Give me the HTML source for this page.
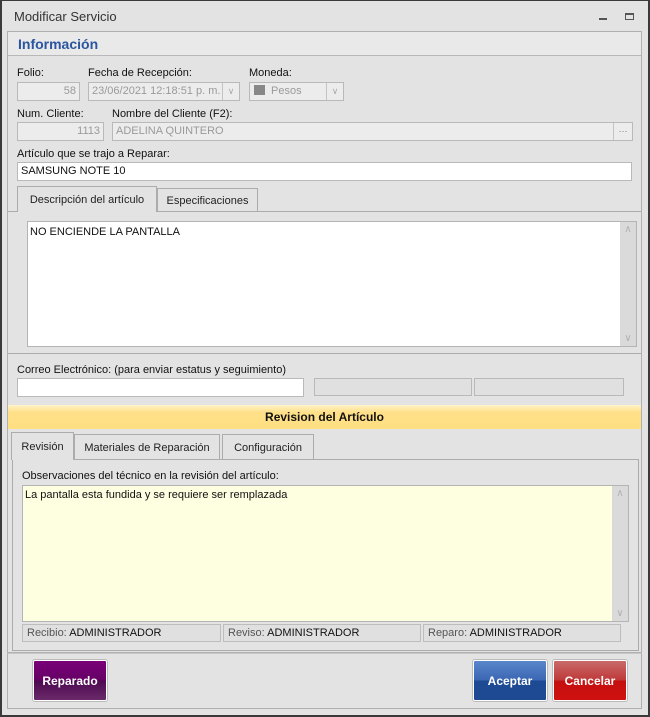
<!DOCTYPE html>
<html><head><meta charset="utf-8"><style>
*{box-sizing:border-box;margin:0;padding:0}
body{width:650px;height:717px;background:#e3e3e3;font-family:"Liberation Sans",sans-serif;font-size:11px;color:#111;position:relative;overflow:hidden}
.a{position:absolute}
.in{position:absolute;border:1px solid #b9b9b9;background:#ececec;color:#9a9a9a;padding:0 3px;line-height:17px;height:19px;white-space:nowrap;overflow:hidden}
.lb{position:absolute;white-space:nowrap}
.dd{position:absolute;border-left:1px solid #c4c4c4;top:0;bottom:0;width:17px;right:0;color:#aaa;text-align:center;font-size:9px;line-height:17px}
.tab{position:absolute;border:1px solid #acacac;border-bottom:none;background:#e3e3e3;text-align:center;line-height:24px;color:#222}
.sb{position:absolute;right:0;top:0;bottom:0;width:16px;background:#dadada;color:#b0b0b0;font-size:10px;text-align:center}
.btn{position:absolute;top:660px;width:74px;height:41px;border:1px solid #fff;border-radius:2px;color:#fff;font-weight:bold;font-size:12px;text-align:center;line-height:40px;box-shadow:0 0 0 1px #bbb}
.st{position:absolute;top:624px;height:18px;border:1px solid #bdbdbd;background:#e0e0e0;line-height:16px;padding-left:4px;color:#111}
.st span{color:#555}
</style></head><body>
<div class="a" style="left:0;top:0;width:650px;height:717px;border:2px solid #3a3a3a;border-top:1px solid #3a3a3a"></div>
<div class="lb" style="left:14px;top:9px;font-size:13px;color:#333">Modificar Servicio</div>
<div class="a" style="left:599px;top:18px;width:8px;height:2px;background:#555"></div>
<div class="a" style="left:625px;top:13px;width:9px;height:7px;border:1px solid #555;border-top:2px solid #555"></div>
<div class="a" style="left:7px;top:31px;width:635px;height:622px;border:1px solid #b0b0b0"></div>
<div class="a" style="left:8px;top:32px;width:633px;height:24px;background:#e9e9e9;border-bottom:1px solid #b8b8b8"></div>
<div class="lb" style="left:18px;top:36px;font-size:14px;font-weight:bold;color:#2a55a0">Información</div>

<div class="lb" style="left:17px;top:67px">Folio:</div>
<div class="lb" style="left:88px;top:67px">Fecha de Recepción:</div>
<div class="lb" style="left:249px;top:67px">Moneda:</div>
<div class="in" style="left:17px;top:82px;width:63px;text-align:right">58</div>
<div class="in" style="left:88px;top:82px;width:152px">23/06/2021 12:18:51 p. m.<div class="dd">&#8744;</div></div>
<div class="in" style="left:249px;top:82px;width:95px;padding-left:4px"><span style="display:inline-block;width:11px;height:10px;background:#888;vertical-align:-1px;margin-right:6px"></span>Pesos<div class="dd">&#8744;</div></div>

<div class="lb" style="left:17px;top:108px">Num. Cliente:</div>
<div class="lb" style="left:112px;top:108px">Nombre del Cliente (F2):</div>
<div class="in" style="left:17px;top:122px;width:87px;text-align:right">1113</div>
<div class="in" style="left:112px;top:122px;width:521px">ADELINA QUINTERO<div class="dd" style="width:19px;color:#777">···</div></div>

<div class="lb" style="left:17px;top:148px">Artículo que se trajo a Reparar:</div>
<div class="in" style="left:17px;top:162px;width:615px;background:#fff;color:#111">SAMSUNG NOTE 10</div>

<div class="a" style="left:8px;top:211px;width:633px;height:143px;border-top:1px solid #acacac;border-bottom:1px solid #acacac"></div>
<div class="tab" style="left:17px;top:186px;width:140px;height:26px;line-height:26px">Descripción del artículo</div>
<div class="tab" style="left:157px;top:188px;width:101px;height:23px;line-height:24px">Especificaciones</div>
<div class="a" style="left:27px;top:221px;width:610px;height:126px;background:#fff;border:1px solid #b4b4b4"><div class="lb" style="left:2px;top:4px">NO ENCIENDE LA PANTALLA</div><div class="sb"><div style="margin-top:2px">&#8743;</div><div style="position:absolute;bottom:2px;width:16px">&#8744;</div></div></div>

<div class="lb" style="left:17px;top:364px">Correo Electrónico: (para enviar estatus y seguimiento)</div>
<div class="in" style="left:17px;top:378px;width:287px;background:#fff"></div>
<div class="in" style="left:314px;top:378px;width:158px;height:18px;background:#e0e0e0"></div>
<div class="in" style="left:474px;top:378px;width:150px;height:18px;background:#e0e0e0"></div>

<div class="a" style="left:8px;top:405px;width:633px;height:24px;background:linear-gradient(#fff3c8,#ffe08a 30%,#ffdf80);text-align:center;line-height:24px;font-weight:bold;font-size:12px">Revision del Artículo</div>

<div class="a" style="left:12px;top:459px;width:627px;height:192px;border:1px solid #acacac"></div>
<div class="tab" style="left:11px;top:432px;width:63px;height:28px;line-height:28px">Revisión</div>
<div class="tab" style="left:74px;top:434px;width:146px;height:25px;line-height:27px">Materiales de Reparación</div>
<div class="tab" style="left:222px;top:434px;width:92px;height:25px;line-height:27px">Configuración</div>
<div class="lb" style="left:22px;top:470px">Observaciones del técnico en la revisión del artículo:</div>
<div class="a" style="left:22px;top:485px;width:607px;height:137px;background:#fefee0;border:1px solid #b4b4b4"><div class="lb" style="left:2px;top:3px">La pantalla esta fundida y se requiere ser remplazada</div><div class="sb"><div style="margin-top:2px">&#8743;</div><div style="position:absolute;bottom:2px;width:16px">&#8744;</div></div></div>
<div class="st" style="left:22px;width:199px"><span>Recibio:</span> ADMINISTRADOR</div>
<div class="st" style="left:223px;width:198px"><span>Reviso:</span> ADMINISTRADOR</div>
<div class="st" style="left:423px;width:198px"><span>Reparo:</span> ADMINISTRADOR</div>

<div class="a" style="left:7px;top:653px;width:635px;height:56px;border:1px solid #b0b0b0;border-top:1px solid #c8c8c8"></div>
<div class="btn" style="left:33px;background:linear-gradient(#7a0078,#660066 48%,#4e0a50 52%,#6a2a6a)">Reparado</div>
<div class="btn" style="left:473px;background:linear-gradient(#5a86cc,#3c68b4 48%,#1e4a94 52%,#1e4a94)">Aceptar</div>
<div class="btn" style="left:553px;background:linear-gradient(#c86a6a,#c03a3a 48%,#c41010 52%,#d01010)">Cancelar</div>
</body></html>
